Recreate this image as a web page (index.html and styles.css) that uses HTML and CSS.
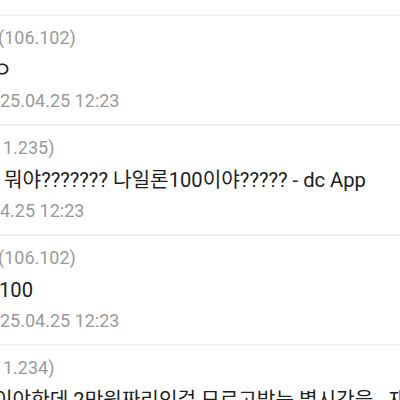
FILE: index.html
```html
<!DOCTYPE html>
<html lang="ko">
<head>
    <meta charset="UTF-8">
    <meta name="viewport" content="width=device-width, initial-scale=1.0">
    <title>댓글</title>
    <link rel="stylesheet" href="styles.css">
</head>
<body>

    <div class="comment-list">
        <!-- previous comment, mostly scrolled out of view -->
        <div class="comment">
            <p class="ip">(106.102)</p>
            <p class="memo">ㅇㅇ</p>
            <p class="date">25.04.25 12:23</p>
        </div>

        <div class="comment">
            <p class="ip">(106.102)</p>
            <p class="memo cut">ㅇ</p>
            <p class="date">25.04.25 12:23</p>
        </div>

        <div class="comment shifted">
            <p class="ip">1.235)</p>
            <p class="memo">뭐야??????? 나일론100이야????? - dc App</p>
            <p class="date">4.25 12:23</p>
        </div>

        <div class="comment">
            <p class="ip">(106.102)</p>
            <p class="memo">100</p>
            <p class="date">25.04.25 12:23</p>
        </div>

        <div class="comment shifted">
            <p class="ip">1.234)</p>
            <p class="memo wrapcut">이야한데 2만원짜리인걸 모르고받는 별시간을 . 재</p>
            <p class="date">4.25 12:23</p>
        </div>
    </div>

</body>
</html>
```

FILE: styles.css
```css
body {
    font-family: Roboto, "Noto Sans CJK KR", sans-serif;
    background-color: #ffffff;
    margin: 0;
    padding: 0;
    overflow: hidden;
}
.comment-list {
    margin-top: -96px;
}
.comment {
    border-top: 2px solid #f1f1f1;
    padding: 6px 0 8px 0;
    white-space: nowrap;
}
.comment p {
    margin: 0;
}
.ip {
    font-size: 18px;
    line-height: 32px;
    color: #9a9a9a;
    margin-left: -2px !important;
}
.memo {
    font-size: 20.2px;
    line-height: 32px;
    color: #202020;
    margin-left: -1px !important;
}
.memo.cut {
    font-size: 22px;
    margin-left: -8px !important;
}
.date {
    font-size: 18px;
    line-height: 30px;
    color: #9a9a9a;
}
.shifted .ip {
    margin-left: 3px !important;
}
.shifted .memo {
    margin-left: 4px !important;
}
.shifted .memo.wrapcut {
    margin-left: -6px !important;
}
```
